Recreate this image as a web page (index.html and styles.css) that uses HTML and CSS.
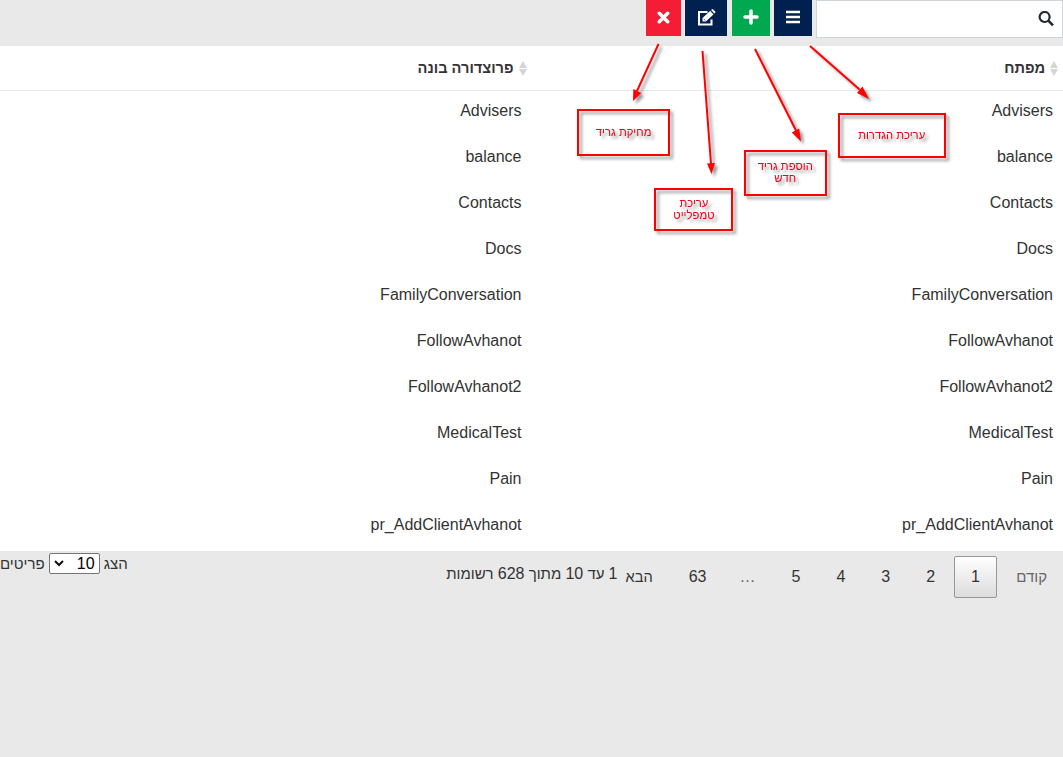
FILE: index.html
```html
<!DOCTYPE html>
<html lang="he" dir="rtl">
<head>
<meta charset="utf-8">
<title>גריד</title>
<link rel="stylesheet" href="styles.css">
</head>
<body>
<header class="toolbar">
  <div class="search">
    <svg width="16" height="16" viewBox="0 0 16 16" fill="none" stroke="#222a30"><circle cx="6.6" cy="6" r="5" stroke-width="2.2"/><path d="M10.3 9.700L15 14.400" stroke-width="2.6"/></svg>
  </div>
  <button class="btn navy menu"><svg width="16" height="14" viewBox="0 0 16 14" fill="#fff"><path d="M1 .7h14v2.500H1zM1 5.700h14v2.500H1zM1 10.700h14v2.500H1z"/></svg></button>
  <button class="btn green"><svg width="16" height="16" viewBox="0 0 16 16"><path d="M8 2v12M2 8h12" stroke="#fff" stroke-width="3.500" stroke-linecap="round"/></svg></button>
  <button class="btn navy edit"><svg width="19" height="17" viewBox="0 0 19 17"><path d="M10.500 3H2v12.500h12.500V10.500" fill="none" stroke="#fff" stroke-width="2"/><path d="M5.500 12.500V9l7.700-7.200 3.500 3.500L9 12.500z" fill="#fff"/><path d="M14 1.100l.8-.7q.7-.6 1.400 0l2 2q.6.7 0 1.400l-.8.8z" fill="#fff"/><path d="M6.700 9.800l1.700 1.700M13.200 1.500l3.700 3.700" stroke="#00204f" stroke-width=".7"/></svg></button>
  <button class="btn red"><svg width="13" height="13" viewBox="0 0 13 13"><path d="M2.300 2.300l8.400 8.400M10.700 2.300l-8.400 8.400" stroke="#fff" stroke-width="3.500" stroke-linecap="round"/></svg></button>
</header>

<div class="grid">
  <div class="row head">
    <div class="cell"><svg class="sort" width="8" height="15" viewBox="0 0 8 15"><path d="M4 0l4 7H0zM0 8h8l-4 7z" fill="#d5d5d5"/></svg><span>מפתח</span></div>
    <div class="cell"><svg class="sort" width="8" height="15" viewBox="0 0 8 15"><path d="M4 0l4 7H0zM0 8h8l-4 7z" fill="#d5d5d5"/></svg><span>פרוצדורה בונה</span></div>
  </div>
  <div class="row"><div class="cell">Advisers</div><div class="cell">Advisers</div></div>
  <div class="row"><div class="cell">balance</div><div class="cell">balance</div></div>
  <div class="row"><div class="cell">Contacts</div><div class="cell">Contacts</div></div>
  <div class="row"><div class="cell">Docs</div><div class="cell">Docs</div></div>
  <div class="row"><div class="cell">FamilyConversation</div><div class="cell">FamilyConversation</div></div>
  <div class="row"><div class="cell">FollowAvhanot</div><div class="cell">FollowAvhanot</div></div>
  <div class="row"><div class="cell">FollowAvhanot2</div><div class="cell">FollowAvhanot2</div></div>
  <div class="row"><div class="cell">MedicalTest</div><div class="cell">MedicalTest</div></div>
  <div class="row"><div class="cell">Pain</div><div class="cell">Pain</div></div>
  <div class="row"><div class="cell">pr_AddClientAvhanot</div><div class="cell">pr_AddClientAvhanot</div></div>
</div>

<footer class="footer">
  <nav class="pages">
    <a class="page prev">קודם</a>
    <a class="page current">1</a>
    <a class="page">2</a>
    <a class="page">3</a>
    <a class="page">4</a>
    <a class="page">5</a>
    <span class="dots">…</span>
    <a class="page">63</a>
    <a class="page next">הבא</a>
  </nav>
  <div class="info"><b>1</b> עד <b>10</b> מתוך <b>628</b> רשומות</div>
  <div class="length">
    <span>הצג</span>
    <span class="select"><span>10</span><svg width="10" height="7" viewBox="0 0 10 7"><path d="M1 1l4 4 4-4" fill="none" stroke="#111" stroke-width="2"/></svg></span>
    <span>פריטים</span>
  </div>
</footer>

<svg class="arrows" width="1063" height="260" viewBox="0 0 1063 260">
  <g stroke="#f00" stroke-width="2" fill="#f00">
    <path d="M658.500 44L637 91"/><path d="M633 101l.3-12 8 4z" stroke="none"/>
    <path d="M702.500 51L711 164"/><path d="M711.500 174l-4.500-10.500 8-.6z" stroke="none"/>
    <path d="M755 49L796 130.500"/><path d="M801 141.500l-9.300-9 7.500-4z" stroke="none"/>
    <path d="M810 46L859.500 89.500"/><path d="M869 99l-12-6 5.500-6.500z" stroke="none"/>
  </g>
</svg>
<div class="note n-delete"><span>מחיקת גריד</span></div>
<div class="note n-edit"><span>עריכת<br>טמפלייט</span></div>
<div class="note n-add"><span>הוספת גריד<br>חדש</span></div>
<div class="note n-settings"><span>עריכת הגדרות</span></div>
</body>
</html>
```
FILE: styles.css
```css
* { box-sizing: border-box; }
body {
  margin: 0;
  height: 757px;
  overflow: hidden;
  position: relative;
  background: #e9e9e9;
  color: #333;
  font: 16px/24px "Liberation Sans", Arial, sans-serif;
}
.toolbar { display: flex; height: 46px; align-items: flex-start; }
.search {
  width: 247px;
  height: 38px;
  background: #fff;
  border: 1px solid #ced4da;
  padding: 10px 8px;
  margin-left: 4px;
}
.search svg { display: block; }
.btn {
  width: 38px;
  height: 36px;
  border: 0;
  padding: 0 0 2px;
  margin: 0 0 0 4px;
  display: flex;
  align-items: center;
  justify-content: center;
}
.navy { background: #00204f; }
.green { background: #00a850; margin-left: 5px; }
.edit { width: 42px; }
.red { background: #f51d35; width: 35px; }

.grid { background: #fff; height: 505px; }
.row { display: grid; grid-template-columns: 531.5px 531.5px; height: 46px; direction: rtl; }
.cell { padding: 8px 10px; }
.head { height: 45px; border-bottom: 1px solid #e8e8e8; font-weight: bold; font-size: 14.6px; }
.head .cell { display: flex; align-items: center; gap: 5px; padding: 0 5px; }

.footer { display: flex; align-items: flex-start; height: 60px; }
.pages { display: flex; gap: 2px; padding-top: 5px; margin-right: -1px; }
.page { border: 1px solid transparent; padding: 8px 16px; height: 42px; line-height: 24px; white-space: nowrap; }
.current {
  border: 1px solid #979797;
  border-radius: 2px;
  background: linear-gradient(#fff, #dcdcdc);
}
.prev { color: #666; font-size: 15px; width: 65px; }
.next { font-size: 14.6px; padding-left: 7px; }
.dots { padding: 9px 16px; margin: 0 1px 0 -2px; color: #666; }
.info { padding-top: 11px; white-space: nowrap; font-size: 15px; }
.info b { font-weight: normal; font-size: 16px; }
.length { margin-right: auto; display: flex; align-items: center; gap: 4px; padding-top: 2px; font-size: 15px; line-height: 21px; }
.select {
  width: 51px;
  height: 21px;
  border: 1px solid #767676;
  border-radius: 2px;
  background: #fff;
  color: #000;
  font-size: 16px;
  line-height: 20px;
  display: flex;
  align-items: center;
  justify-content: space-between;
  padding: 0 4px;
}

.arrows { position: absolute; left: 0; top: 0; filter: drop-shadow(3px 3px 1.5px rgba(0, 0, 0, .4)); }
.note {
  position: absolute;
  border: 2px solid #f00;
  color: #f00018;
  font-size: 12px;
  line-height: 12px;
  text-align: center;
  display: flex;
  align-items: center;
  justify-content: center;
  white-space: nowrap;
  padding-bottom: 2px;
  filter: drop-shadow(3px 3px 1.5px rgba(0, 0, 0, .4));
}
.note span { transform: scale(.94, 1.04); }
.n-delete { left: 577px; top: 109px; width: 93px; height: 47px; }
.n-edit { left: 654px; top: 188px; width: 79px; height: 43px; }
.n-add { left: 744px; top: 150px; width: 83px; height: 46px; }
.n-settings { left: 838px; top: 113px; width: 108px; height: 45px; }
```
